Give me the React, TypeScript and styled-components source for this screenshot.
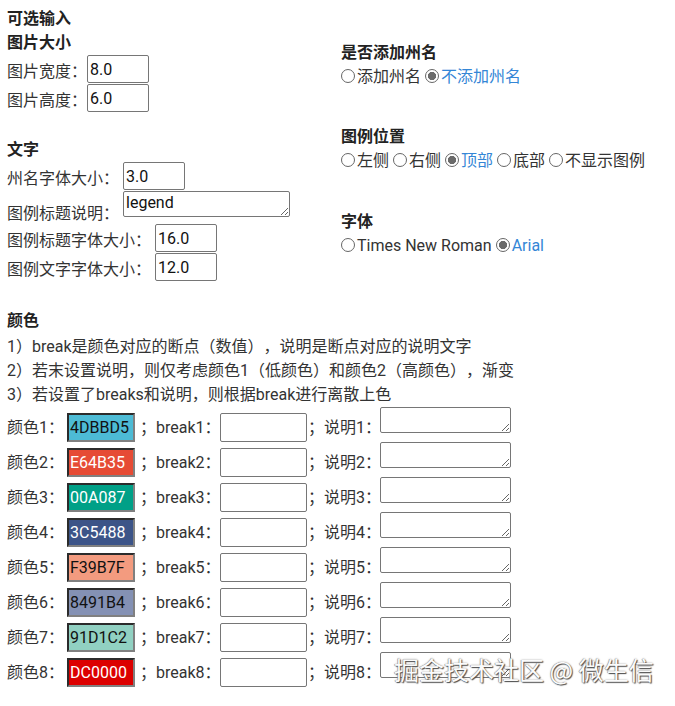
import React from 'react';
import styled, { createGlobalStyle } from 'styled-components';

const GlobalStyle = createGlobalStyle`
  body {
    margin: 0;
    background: #fff;
    color: #333;
    font-family: Roboto, "Noto Sans CJK SC", sans-serif;
    font-size: 16px;
    text-spacing-trim: space-all;
  }
  input, textarea {
    font-family: inherit;
  }
`;

const Page = styled.div`
  position: relative;
  width: 675px;
  height: 706px;
  overflow: hidden;
  box-sizing: border-box;
  padding: 7px 0 0 7px;
`;

const Title = styled.div`
  font-weight: 700;
  line-height: 24px;
  color: #222;
`;

const Heading = styled.div<{ $mt?: number }>`
  margin-top: ${(p) => p.$mt ?? 0}px;
  font-weight: 700;
  line-height: 24px;
  color: #222;
`;

const Columns = styled.div`
  display: grid;
  grid-template-columns: 334px 1fr;
`;

const Column = styled.div<{ $pt?: number }>`
  padding-top: ${(p) => p.$pt ?? 0}px;
`;

const FieldGrid = styled.div<{ $gap: number; $mt?: number }>`
  display: grid;
  grid-template-columns: max-content max-content;
  column-gap: ${(p) => p.$gap}px;
  row-gap: 1px;
  margin-top: ${(p) => p.$mt ?? 0}px;
`;

const Label = styled.span`
  align-self: center;
  padding-top: 5px;
  line-height: 16px;
  white-space: nowrap;
`;

const TextareaLabel = styled(Label)`
  align-self: end;
  padding-top: 0;
  margin-bottom: -5px;
`;

const NumInput = styled.input`
  box-sizing: border-box;
  width: 62px;
  height: 28px;
  padding: 1px 2px;
  border: 1px solid #767676;
  border-radius: 2px;
  font-size: 16px;
  color: #111;
  outline: none;
`;

const TextBox = styled.textarea<{ $w: number }>`
  box-sizing: border-box;
  width: ${(p) => p.$w}px;
  height: 26px;
  margin: 0;
  padding: 0 2px;
  border: 1px solid #767676;
  border-radius: 2px;
  font-size: 16px;
  line-height: 22px;
  color: #111;
  outline: none;
  display: block;
`;

const RadioRow = styled.div`
  display: flex;
  align-items: center;
  gap: 4px;
  height: 24px;
`;

const RadioOption = styled.label<{ $on: boolean }>`
  display: inline-flex;
  align-items: center;
  gap: 2px;
  line-height: 24px;
  color: ${(p) => (p.$on ? '#3486d6' : '#333')};
  white-space: nowrap;
`;

const Radio = styled.input`
  appearance: none;
  box-sizing: border-box;
  width: 14px;
  height: 14px;
  margin: -2px 0 0 0;
  border: 1.3px solid #666;
  border-radius: 50%;
  background: #fff;
  &:checked {
    border-color: #666;
    background: radial-gradient(circle, #6a6a6a 0 3.8px, #fff 4.4px);
  }
`;

const Notes = styled.div`
  margin-top: 2px;
  line-height: 24px;
  white-space: nowrap;
`;

const ColorGrid = styled.div`
  display: grid;
  grid-template-columns: 60px 68px 85px 87px 73px 131px;
  grid-auto-rows: 35px;
  align-items: start;
`;

const RowText = styled.span<{ $indent?: number }>`
  margin-top: 13px;
  padding-left: ${(p) => p.$indent ?? 0}px;
  line-height: 16px;
  white-space: nowrap;
`;

const Swatch = styled.input<{ $bg: string; $fg: string }>`
  box-sizing: border-box;
  width: 68px;
  height: 29px;
  margin-top: 6px;
  padding: 0 1px;
  border: 2px solid;
  border-color: #2b2b2b #808080 #808080 #2b2b2b;
  background: ${(p) => p.$bg};
  color: ${(p) => p.$fg};
  font-size: 16px;
  outline: none;
`;

const BreakInput = styled(NumInput)`
  width: 87px;
  height: 29px;
  margin-top: 6px;
`;

const Watermark = styled.div`
  position: absolute;
  left: 394px;
  top: 653px;
  font-family: "Noto Sans CJK SC", sans-serif;
  font-size: 25px;
  line-height: 32px;
  color: #fbfbfb;
  text-shadow: 1px 1px 1px #4a4a4a, -0.5px -0.5px 0 #8a8a8a, 0 0 2px rgba(0, 0, 0, 0.4);
  white-space: nowrap;
  pointer-events: none;
`;

const colors = [
  { hex: '4DBBD5', fg: '#111' },
  { hex: 'E64B35', fg: '#fff' },
  { hex: '00A087', fg: '#fff' },
  { hex: '3C5488', fg: '#fff' },
  { hex: 'F39B7F', fg: '#111' },
  { hex: '8491B4', fg: '#111' },
  { hex: '91D1C2', fg: '#111' },
  { hex: 'DC0000', fg: '#fff' },
];

type Group = { title: string; mt: number; options: string[]; selected: number };

const radioGroups: Group[] = [
  { title: '是否添加州名', mt: 0, options: ['添加州名', '不添加州名'], selected: 1 },
  { title: '图例位置', mt: 36, options: ['左侧', '右侧', '顶部', '底部', '不显示图例'], selected: 2 },
  { title: '字体', mt: 37, options: ['Times New Roman', 'Arial'], selected: 1 },
];

const App = () => {
  return (
    <Page>
      <GlobalStyle />
      <Title>可选输入</Title>
      <Columns>
        <Column>
          <Heading>图片大小</Heading>
          <FieldGrid $gap={0}>
            <Label>图片宽度：</Label>
            <NumInput defaultValue="8.0" />
            <Label>图片高度：</Label>
            <NumInput defaultValue="6.0" />
          </FieldGrid>

          <Heading $mt={26}>文字</Heading>
          <FieldGrid $gap={4}>
            <Label>州名字体大小：</Label>
            <NumInput defaultValue="3.0" />
            <TextareaLabel>图例标题说明：</TextareaLabel>
            <TextBox $w={167} defaultValue="legend" />
          </FieldGrid>
          <FieldGrid $gap={4} $mt={7}>
            <Label>图例标题字体大小：</Label>
            <NumInput defaultValue="16.0" />
            <Label>图例文字字体大小：</Label>
            <NumInput defaultValue="12.0" />
          </FieldGrid>
        </Column>

        <Column $pt={10}>
          {radioGroups.map((g, gi) => (
            <div key={g.title}>
              <Heading $mt={g.mt}>{g.title}</Heading>
              <RadioRow>
                {g.options.map((o, i) => (
                  <RadioOption key={o} $on={i === g.selected}>
                    <Radio type="radio" name={`g${gi}`} defaultChecked={i === g.selected} />
                    {o}
                  </RadioOption>
                ))}
              </RadioRow>
            </div>
          ))}
        </Column>
      </Columns>

      <Heading $mt={28}>颜色</Heading>
      <Notes>
        <div>1）break是颜色对应的断点（数值），说明是断点对应的说明文字</div>
        <div>2）若末设置说明，则仅考虑颜色1（低颜色）和颜色2（高颜色），渐变</div>
        <div>3）若设置了breaks和说明，则根据break进行离散上色</div>
      </Notes>

      <ColorGrid>
        {colors.map((c, i) => (
          <React.Fragment key={c.hex}>
            <RowText>颜色{i + 1}：</RowText>
            <Swatch $bg={`#${c.hex}`} $fg={c.fg} defaultValue={c.hex} />
            <RowText $indent={5}>；break{i + 1}：</RowText>
            <BreakInput />
            <RowText $indent={1}>；说明{i + 1}：</RowText>
            <TextBox $w={131} />
          </React.Fragment>
        ))}
      </ColorGrid>

      <Watermark>掘金技术社区 @ 微生信</Watermark>
    </Page>
  );
};

export default App;
